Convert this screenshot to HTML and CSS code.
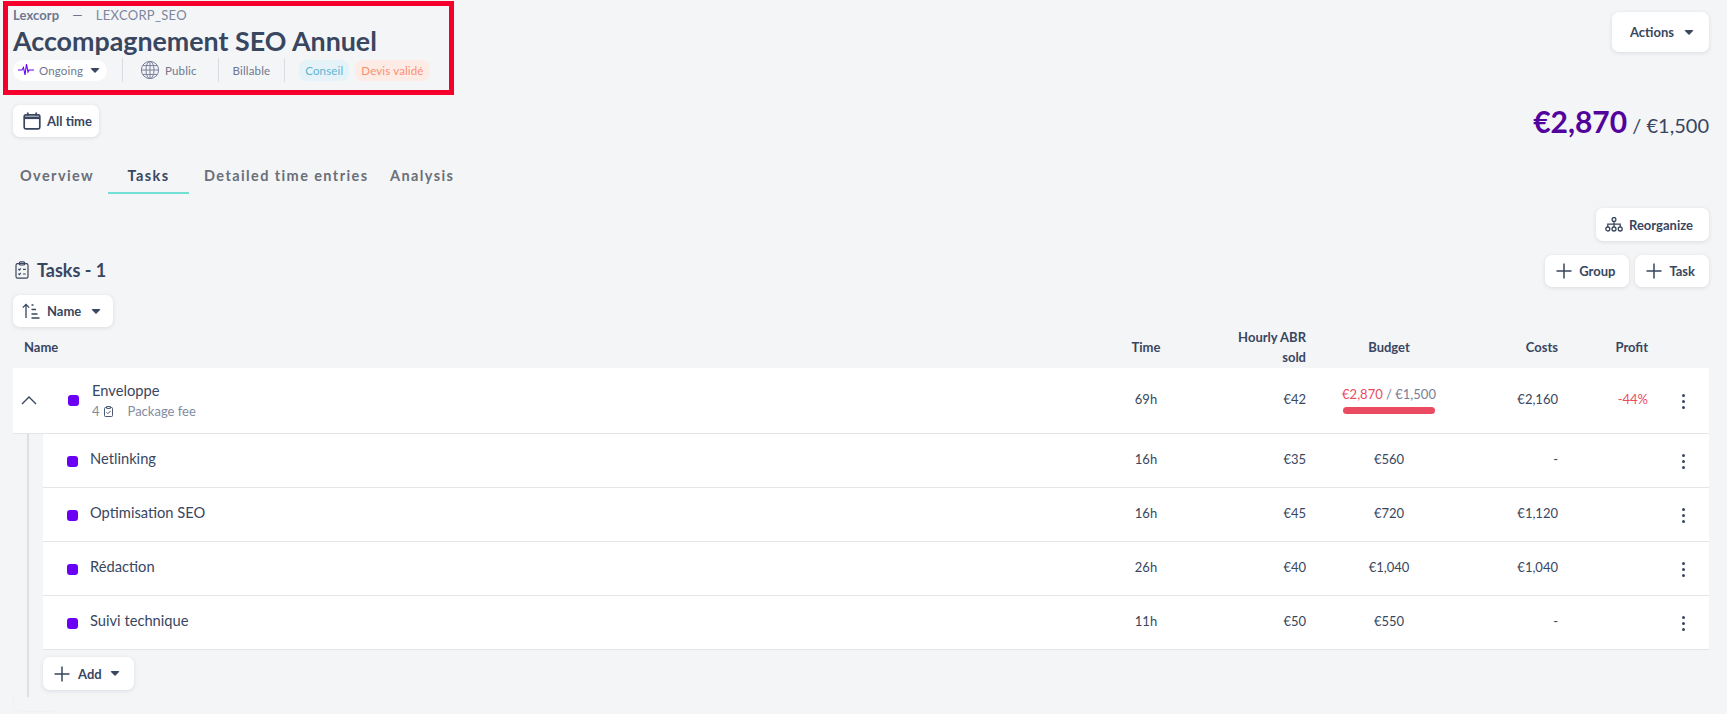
FILE: index.html
```html
<!DOCTYPE html>
<html lang="en">
  <head>
    <meta charset="UTF-8" />
    <title>Accompagnement SEO Annuel</title>
    <link rel="stylesheet" href="styles.css">
  </head>
  <body>
    <div class="top">
      <div class="project-head">
        <div class="crumbs"><b>Lexcorp</b><span class="dash">—</span><span class="code">LEXCORP_SEO</span></div>
        <h1>Accompagnement SEO Annuel</h1>
        <div class="meta">
          <div class="status">
            <svg width="16" height="14" viewBox="0 0 16 14" fill="none" stroke="#6a00f4" stroke-width="1.1"><path d="M0 7h4l1.5-2.5L7 12l1.5-11 1.5 8 1-2h5"/></svg>
            <span>Ongoing</span><i class="caret"></i>
          </div>
          <div class="meta-item public">
            <svg width="20" height="20" viewBox="0 0 20 20" fill="none" stroke="#77809a" stroke-width="1"><circle cx="10" cy="10" r="8.6"/><ellipse cx="10" cy="10" rx="4" ry="8.6"/><path d="M10 1.4v17.2M1.4 10h17.2M2.6 5.6h14.8M2.6 14.4h14.8"/></svg>
            <span>Public</span>
          </div>
          <div class="meta-item billable">Billable</div>
          <div class="meta-item tags">
            <span class="tag tag-blue">Conseil</span>
            <span class="tag tag-orange">Devis validé</span>
          </div>
        </div>
      </div>
      <button class="btn btn-actions">Actions <i class="caret"></i></button>
    </div>

    <div class="period">
      <button class="btn btn-time">
        <svg width="18" height="18" viewBox="0 0 18 18" fill="none" stroke="#39465f" stroke-width="1.7"><rect x="1.2" y="2.8" width="15.6" height="14" rx="1.5"/><path d="M1.2 5.8h15.6" stroke-width="2.6"/><path d="M4.8.5v3M13.2.5v3"/></svg>
        All time
      </button>
      <div class="total"><strong>€2,870</strong> / €1,500</div>
    </div>

    <nav class="tabs">
      <a class="tab tab-overview">Overview</a>
      <a class="tab tab-active">Tasks</a>
      <a class="tab tab-detail">Detailed time entries</a>
      <a class="tab tab-analysis">Analysis</a>
    </nav>

    <div class="reorganize">
      <button class="btn btn-reorganize">
        <svg width="18" height="15" viewBox="0 0 18 15" fill="none" stroke="#39465f" stroke-width="1.3"><circle cx="9" cy="2.4" r="1.9"/><circle cx="2.8" cy="12" r="2"/><circle cx="9" cy="12" r="2"/><circle cx="15.2" cy="12" r="2"/><path d="M9 4.3V10M2.8 10V7.2h12.4V10"/></svg>
        Reorganize
      </button>
    </div>

    <div class="tasks-bar">
      <h2>
        <svg width="14" height="18" viewBox="0 0 14 18" fill="none" stroke="#39465f" stroke-width="1.2"><rect x="1" y="2.6" width="12" height="14.6" rx="1.6"/><rect x="4.4" y=".8" width="5.2" height="3.2" rx="1"/><path d="M3.4 8l1 1 1.4-1.6M8 8.4h2.8M3.4 12.6l1 1 1.4-1.6M8 13h2.8"/></svg>
        Tasks - 1
      </h2>
      <div class="tasks-actions">
        <button class="btn btn-add"><svg class="plus" width="16" height="16" viewBox="0 0 16 16"><path d="M8 .5v15M.5 8h15"/></svg>Group</button>
        <button class="btn btn-add"><svg class="plus" width="16" height="16" viewBox="0 0 16 16"><path d="M8 .5v15M.5 8h15"/></svg>Task</button>
      </div>
    </div>

    <button class="btn btn-sort">
      <svg width="18" height="16" viewBox="0 0 18 16" fill="none" stroke="#39465f" stroke-width="1.3"><path d="M4 15V1.5M.8 4.6 4 1.4l3.2 3.2M9.5 2h2M9.5 6.5h4.5M9.5 11h6M9.5 15h8"/></svg>
      Name <i class="caret"></i>
    </button>

    <div class="row head">
      <div class="name-col">Name</div>
      <div class="center">Time</div>
      <div class="right">Hourly ABR<br>sold</div>
      <div class="center">Budget</div>
      <div class="right">Costs</div>
      <div class="right">Profit</div>
      <div></div>
    </div>

    <div class="row parent">
      <div class="name-col">
        <svg class="chevron" width="16" height="9" viewBox="0 0 16 9" fill="none" stroke="#39465f" stroke-width="1.4"><path d="M1 8l7-7 7 7"/></svg>
        <span class="dot"></span>
        <div class="parent-text">
          <div class="task-name">Enveloppe</div>
          <div class="task-sub">
            <span class="count">4</span>
            <svg width="9" height="11" viewBox="0 0 9 11" fill="none" stroke="#39465f" stroke-width=".9"><rect x=".5" y="1.5" width="8" height="9" rx="1"/><rect x="2.8" y=".4" width="3.4" height="2" fill="#fff"/><path d="M2.4 6.2l1.5 1.5 2.8-2.8"/></svg>
            <span class="fee">Package fee</span>
          </div>
        </div>
      </div>
      <div class="center">69h</div>
      <div class="right">€42</div>
      <div class="center">
        <div class="budget"><span class="over">€2,870</span> <span class="sep">/</span> <span class="planned">€1,500</span></div>
        <div class="bar"></div>
      </div>
      <div class="right">€2,160</div>
      <div class="right over">-44%</div>
      <div class="menu"><i></i><i></i><i></i></div>
    </div>

    <div class="children">
      <div class="row child">
        <div class="name-col"><span class="dot"></span><div class="task-name">Netlinking</div></div>
        <div class="center">16h</div>
        <div class="right">€35</div>
        <div class="center">€560</div>
        <div class="right">-</div>
        <div class="right"></div>
        <div class="menu"><i></i><i></i><i></i></div>
      </div>
      <div class="row child">
        <div class="name-col"><span class="dot"></span><div class="task-name">Optimisation SEO</div></div>
        <div class="center">16h</div>
        <div class="right">€45</div>
        <div class="center">€720</div>
        <div class="right">€1,120</div>
        <div class="right"></div>
        <div class="menu"><i></i><i></i><i></i></div>
      </div>
      <div class="row child">
        <div class="name-col"><span class="dot"></span><div class="task-name">Rédaction</div></div>
        <div class="center">26h</div>
        <div class="right">€40</div>
        <div class="center">€1,040</div>
        <div class="right">€1,040</div>
        <div class="right"></div>
        <div class="menu"><i></i><i></i><i></i></div>
      </div>
      <div class="row child">
        <div class="name-col"><span class="dot"></span><div class="task-name">Suivi technique</div></div>
        <div class="center">11h</div>
        <div class="right">€50</div>
        <div class="center">€550</div>
        <div class="right">-</div>
        <div class="right"></div>
        <div class="menu"><i></i><i></i><i></i></div>
      </div>
      <button class="btn btn-child-add"><svg class="plus" width="16" height="16" viewBox="0 0 16 16"><path d="M8 .5v15M.5 8h15"/></svg>Add <i class="caret"></i></button>
    </div>
    <div class="panel-end"></div>
  </body>
</html>
```

FILE: styles.css
```css
body {
  margin: 0;
  height: 714px;
  overflow: hidden;
  padding: 1px 18px 0 13px;
  box-sizing: border-box;
  background: #f4f5f7;
  color: #39465f;
  font-family: "Lato", "Noto Sans", sans-serif;
  font-size: 13px;
}

.top {
  display: flex;
  justify-content: space-between;
  align-items: flex-start;
  height: 93px;
}

.project-head {
  box-sizing: border-box;
  width: 451px;
  height: 94px;
  margin-left: -10px;
  padding: 1px 0 0 5px;
  border: 5px solid #f5002d;
}

.crumbs {
  display: flex;
  font-size: 13px;
  letter-spacing: 0.1px;
  line-height: 16px;
  color: #6e7891;
}

.crumbs b {
  font-weight: 700;
}

.code {
  letter-spacing: 0.3px;
  color: #7d869c;
}

.dash {
  margin: 0 13px;
}

h1 {
  margin: 1px 0 0;
  font-size: 26.8px;
  line-height: 34px;
  font-weight: 700;
  color: #39465f;
}

.meta {
  display: flex;
  align-items: center;
  margin-top: 0;
  font-size: 11.5px;
  letter-spacing: 0.15px;
  color: #6e7891;
}

.status {
  display: flex;
  align-items: center;
  gap: 5px;
  width: 94px;
  height: 21px;
  box-sizing: border-box;
  padding-left: 5px;
  border-radius: 11px;
  background: #fff;
}

.status .caret {
  margin-left: 2px;
}

.meta-item {
  display: flex;
  align-items: center;
  height: 24px;
  margin-left: 15px;
  padding-left: 17px;
  border-left: 1px solid #d9dce2;
}

.public {
  gap: 5px;
}

.billable {
  margin-left: 21px;
  padding-left: 14px;
}

.tags {
  margin-left: 14px;
  padding-left: 14px;
  gap: 6px;
}

.tag {
  padding: 0 6px;
  line-height: 21px;
  border-radius: 8px;
}

.tag-blue {
  background: #e5f3f8;
  color: #60b4d2;
}

.tag-orange {
  background: #fdebe5;
  color: #fb8f72;
}

.caret {
  display: inline-block;
  width: 0;
  height: 0;
  border-style: solid;
  border-width: 5px 5px 0;
  border-color: #39465f transparent transparent;
  border-radius: 2px;
}

.btn {
  display: inline-flex;
  align-items: center;
  box-sizing: border-box;
  border: 0;
  padding: 0;
  background: #fff;
  border-radius: 7px;
  box-shadow: 0 1px 4px rgba(57, 70, 95, 0.14);
  color: #39465f;
  font: 700 13px "Lato", "Noto Sans", sans-serif;
}

.btn-actions {
  width: 97px;
  height: 40px;
  margin-top: 11px;
  padding-left: 18px;
  gap: 10px;
}

.period {
  display: flex;
  justify-content: space-between;
  align-items: center;
  height: 32px;
  margin-top: 11px;
}

.btn-time {
  width: 86px;
  height: 32px;
  padding-left: 10px;
  gap: 6px;
}

.total {
  font-size: 20px;
  color: #39465f;
}

.total strong {
  font-size: 30px;
  font-weight: 700;
  color: #52039c;
}

.tabs {
  display: flex;
  margin-top: 24px;
  height: 33px;
  letter-spacing: 1.4px;
  font-weight: 700;
  font-size: 14.5px;
  color: #6a6f78;
}

.tab {
  box-sizing: border-box;
  line-height: 30px;
}

.tab-overview {
  width: 95px;
  padding-left: 7px;
}

.tab-active {
  width: 81px;
  text-align: center;
  color: #39465f;
  border-bottom: 2px solid #73dfd5;
}

.tab-detail {
  width: 201px;
  padding-left: 15px;
}

.reorganize {
  display: flex;
  justify-content: flex-end;
  margin-top: 14px;
}

.btn-reorganize {
  width: 113px;
  height: 33px;
  padding-left: 9px;
  gap: 6px;
}

.tasks-bar {
  display: flex;
  justify-content: space-between;
  margin-top: 14px;
}

h2 {
  display: flex;
  align-items: center;
  gap: 8px;
  margin: -1px 0 0 2px;
  height: 32px;
  font-size: 18px;
  font-weight: 700;
}

.tasks-actions {
  display: flex;
  gap: 6px;
}

.btn-add {
  height: 32px;
  padding: 0 14px 0 11px;
  gap: 7px;
}

.plus {
  fill: none;
  stroke: #39465f;
  stroke-width: 1.5;
}

.btn-sort {
  width: 100px;
  height: 32px;
  margin-top: 8px;
  padding-left: 9px;
  gap: 7px;
}

.btn-sort .caret {
  margin-left: 3px;
}

.row {
  display: grid;
  grid-template-columns: 1fr 60px 130px 166px 86px 90px 61px;
  align-items: center;
  line-height: 19px;
}

.center {
  text-align: center;
}

.right {
  text-align: right;
}

.head {
  box-sizing: border-box;
  height: 41px;
  padding-bottom: 2px;
  font-weight: 700;
}

.head .name-col {
  padding-left: 11px;
}

.head .center,
.head .right {
  line-height: 20px;
}

.parent,
.child {
  background: #fff;
  border-bottom: 1px solid #e3e5e9;
  padding-bottom: 3px;
  box-sizing: border-box;
}

.parent {
  height: 66px;
}

.name-col {
  display: flex;
  align-items: center;
}

.chevron {
  margin: 2px 0 0 8px;
}

.dot {
  width: 11px;
  height: 11px;
  border-radius: 3px;
  background: #6a00f4;
  flex: none;
}

.parent .dot {
  margin: 2px 13px 0 31px;
}

.child .dot {
  margin: 4px 12px 0 24px;
}

.task-name {
  font-size: 14.7px;
  margin-top: -1px;
}

.parent-text {
  margin-top: 4px;
}

.parent .task-name {
  margin-top: 0;
}

.task-sub {
  display: flex;
  align-items: center;
  margin-top: 2px;
  font-size: 13px;
  color: #838ba0;
}

.count {
  margin-right: 4px;
}

.fee {
  margin-left: 15px;
}

.budget {
  font-size: 13px;
  margin-top: 1px;
}

.over {
  color: #ea4b63;
}

.planned,
.sep {
  color: #77809a;
}

.bar {
  width: 92px;
  height: 7px;
  margin: 3px auto 0;
  border-radius: 4px;
  background: #ea4b63;
}

.menu {
  display: flex;
  flex-direction: column;
  gap: 3px;
  padding-left: 34px;
  margin-top: 4px;
}

.menu i {
  width: 3px;
  height: 3px;
  border-radius: 50%;
  background: #39465f;
}

.children {
  margin-left: 14px;
  padding: 0 0 7px 14px;
  border-left: 2px solid #dcdfe4;
}

.child {
  height: 54px;
}

.btn-child-add {
  width: 91px;
  height: 33px;
  margin-top: 7px;
  padding-left: 11px;
  gap: 8px;
}

.panel-end {
  width: 40px;
  height: 14px;
  border-left: 1px solid #eef0f2;
  border-bottom: 1px solid #eef0f2;
  border-bottom-left-radius: 8px;
}
```
